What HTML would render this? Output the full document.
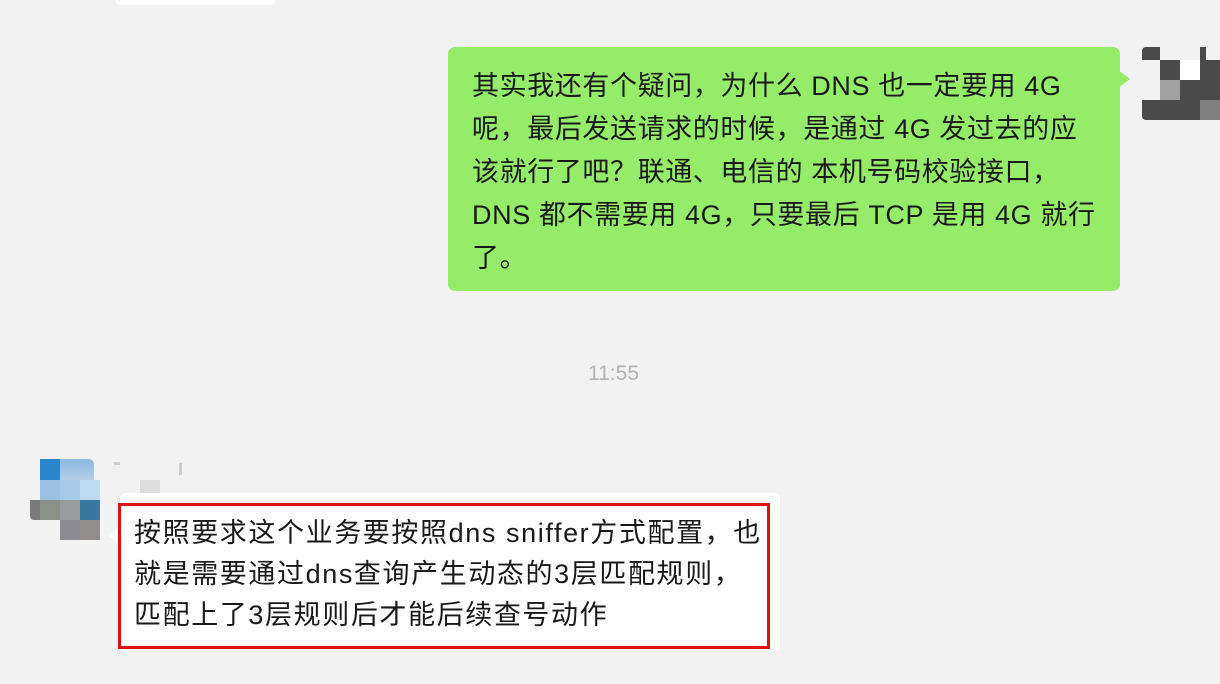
<!DOCTYPE html>
<html><head><meta charset="utf-8"><style>
body{margin:0;width:1220px;height:684px;background:#f2f2f2;position:relative;overflow:hidden;font-family:"Liberation Sans","Noto Sans CJK SC",sans-serif;}
.a{position:absolute}
.g{left:448px;top:47px;width:672px;height:244px;background:#95ec69;border-radius:7px;}
.gt{position:absolute;left:24px;top:18px;font-size:27px;line-height:43px;color:#191919;white-space:nowrap;letter-spacing:0.6px}
.w{left:120px;top:493px;width:660px;height:159px;background:#fff;border-radius:6px}
.rb{left:118px;top:503px;width:646px;height:140px;border:3px solid #e01010;}
.wt{position:absolute;left:13px;top:7px;font-size:27px;line-height:41px;color:#191919;white-space:nowrap;letter-spacing:1.6px}
.b{position:absolute;width:20px;height:20px}
</style></head><body>
<div class="a" style="left:115px;top:0;width:160px;height:5px;background:#fff;border-radius:0 0 5px 5px"></div>
<div class="a g"><div class="gt">其实我还有个疑问，为什么 DNS 也一定要用 4G<br>呢，最后发送请求的时候，是通过 4G 发过去的应<br>该就行了吧？联通、电信的 本机号码校验接口，<br>DNS 都不需要用 4G，只要最后 TCP 是用 4G 就行<br>了。</div></div>
<div class="a" style="left:1118px;top:70px;width:0;height:0;border-left:12px solid #95ec69;border-top:9px solid transparent;border-bottom:9px solid transparent"></div>
<div class="a" style="left:1142px;top:47px;width:78px;height:73px;">
<div class="b" style="left:0;top:0;height:13px;width:18px;background:#4a4a4a;border-radius:4px 0 0 0"></div>
<div class="b" style="left:58px;top:0;height:13px;width:6px;background:#4a4a4a"></div>
<div class="b" style="left:18px;top:13px;background:#4a4a4a"></div>
<div class="b" style="left:38px;top:13px;background:#fff"></div>
<div class="b" style="left:58px;top:13px;background:#4a4a4a"></div>
<div class="b" style="left:18px;top:33px;background:#a0a0a0"></div>
<div class="b" style="left:38px;top:33px;width:40px;background:#4a4a4a"></div>
<div class="b" style="left:0;top:53px;width:58px;background:#4a4a4a;border-radius:0 0 0 4px"></div>
<div class="b" style="left:58px;top:53px;background:#808080"></div>
</div>
<div class="a" style="left:588px;top:362px;font-size:21px;color:#b2b2b2">11:55</div>
<div class="b a" style="left:40px;top:459px;height:21px;background:#2a86c8"></div>
<div class="b a" style="left:60px;top:459px;height:21px;width:34px;background:linear-gradient(#8fb8e0,#b0cde8);border-radius:0 5px 0 0"></div>
<div class="b a" style="left:40px;top:480px;background:#9cc0e0"></div>
<div class="b a" style="left:60px;top:480px;background:#a8c8e8"></div>
<div class="b a" style="left:80px;top:480px;background:#c0d8f0"></div>
<div class="b a" style="left:30px;top:500px;width:10px;background:#7a7a78;border-radius:0 0 0 4px"></div>
<div class="b a" style="left:40px;top:500px;background:#8a9088"></div>
<div class="b a" style="left:60px;top:500px;background:#989c9c"></div>
<div class="b a" style="left:80px;top:500px;background:#3a78a0"></div>
<div class="b a" style="left:60px;top:520px;background:#8a8a90"></div>
<div class="b a" style="left:80px;top:520px;background:#908c8c"></div>
<div class="a" style="left:114px;top:462px;width:6px;height:3px;background:#ccc"></div>
<div class="a" style="left:179px;top:463px;width:3px;height:12px;background:#ccc"></div>
<div class="a" style="left:140px;top:480px;width:20px;height:20px;background:#ddd"></div>
<div class="a w"></div>
<div class="a" style="left:108px;top:526px;width:0;height:0;border-right:12px solid #fff;border-top:9px solid transparent;border-bottom:9px solid transparent"></div>
<div class="a rb"><div class="wt">按照要求这个业务要按照dns sniffer方式配置，也<br>就是需要通过dns查询产生动态的3层匹配规则，<br>匹配上了3层规则后才能后续查号动作</div></div>
</body></html>
